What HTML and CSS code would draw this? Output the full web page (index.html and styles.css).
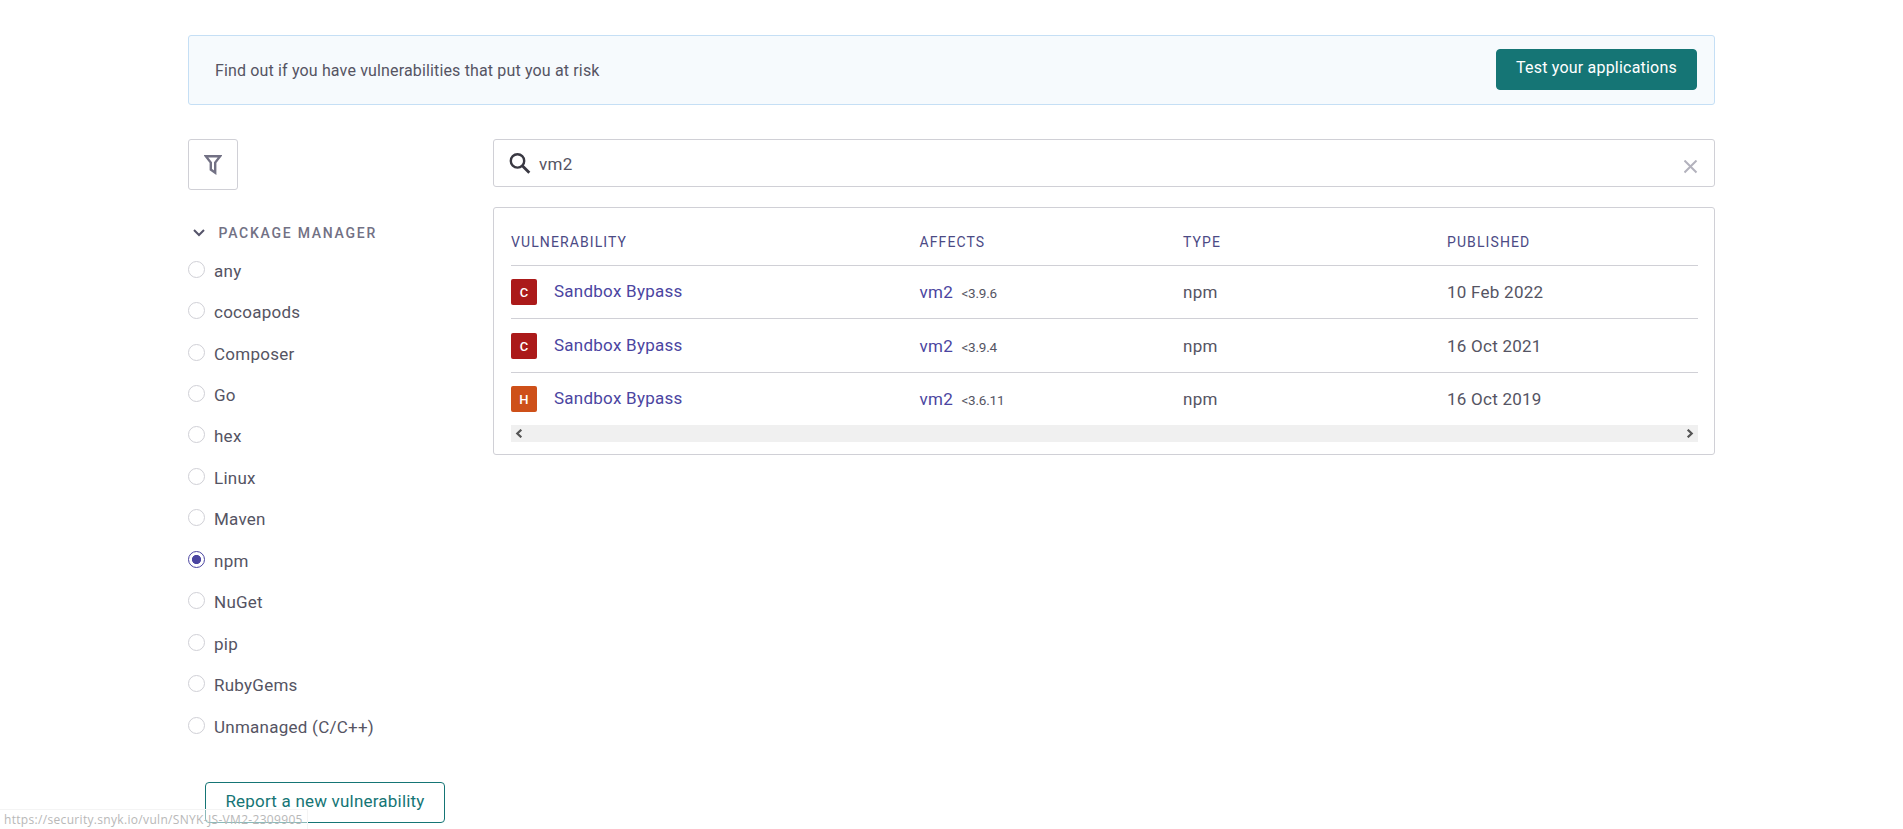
FILE: index.html
```html
<!DOCTYPE html>
<html lang="en">
<head>
    <meta charset="UTF-8">
    <meta name="viewport" content="width=device-width, initial-scale=1.0">
    <title>Vulnerability DB</title>
    <link rel="stylesheet" href="styles.css">
</head>
<body>
    <div class="container">
        <div class="banner">
            <p>Find out if you have vulnerabilities that put you at risk</p>
            <a class="button button-primary" href="#test">Test your applications</a>
        </div>

        <div class="columns">
            <div class="sidebar">
                <button class="filter" aria-label="Filter">
                    <svg width="18" height="21" viewBox="0 0 18 21" fill="none" stroke="#727184" stroke-width="2.4">
                        <path d="M1.8 2.2h14.4L11.2 8.6v10.1L6.8 15.6V8.6z"/>
                    </svg>
                </button>

                <h2 class="group-title">
                    <svg width="12" height="8" viewBox="0 0 12 8" fill="none" stroke="#55546a" stroke-width="2">
                        <path d="M1 1l5 5 5-5"/>
                    </svg>
                    <span>Package manager</span>
                </h2>

                <div class="options">
                    <label><input type="radio" name="type"><span>any</span></label>
                    <label><input type="radio" name="type"><span>cocoapods</span></label>
                    <label><input type="radio" name="type"><span>Composer</span></label>
                    <label><input type="radio" name="type"><span>Go</span></label>
                    <label><input type="radio" name="type"><span>hex</span></label>
                    <label><input type="radio" name="type"><span>Linux</span></label>
                    <label><input type="radio" name="type"><span>Maven</span></label>
                    <label><input type="radio" name="type" checked><span>npm</span></label>
                    <label><input type="radio" name="type"><span>NuGet</span></label>
                    <label><input type="radio" name="type"><span>pip</span></label>
                    <label><input type="radio" name="type"><span>RubyGems</span></label>
                    <label><input type="radio" name="type"><span>Unmanaged (C/C++)</span></label>
                </div>

                <a class="button button-outline" href="#report">Report a new vulnerability</a>
            </div>

            <div class="content">
                <div class="search">
                    <svg class="search-icon" width="22" height="22" viewBox="0 0 22 22" fill="none" stroke="#393842">
                        <circle cx="8.5" cy="8.9" r="6.7" stroke-width="2.4"/>
                        <path d="M13.3 13.7l7 7" stroke-width="2.8"/>
                    </svg>
                    <span class="search-text">vm2</span>
                    <svg class="clear-icon" width="14" height="14" viewBox="0 0 14 14" fill="none" stroke="#b3b2bd" stroke-width="2">
                        <path d="M.5.5l12 12M12.5.5l-12 12"/>
                    </svg>
                </div>

                <div class="results">
                    <table>
                        <thead>
                            <tr>
                                <th class="col-vuln">Vulnerability</th>
                                <th class="col-affects">Affects</th>
                                <th class="col-type">Type</th>
                                <th>Published</th>
                            </tr>
                        </thead>
                        <tbody>
                            <tr>
                                <td><div class="vuln"><span class="severity critical">C</span><a href="#1">Sandbox Bypass</a></div></td>
                                <td><a href="#vm2">vm2</a><span class="version">&lt;3.9.6</span></td>
                                <td>npm</td>
                                <td>10 Feb 2022</td>
                            </tr>
                            <tr class="tall">
                                <td><div class="vuln"><span class="severity critical">C</span><a href="#2">Sandbox Bypass</a></div></td>
                                <td><a href="#vm2">vm2</a><span class="version">&lt;3.9.4</span></td>
                                <td>npm</td>
                                <td>16 Oct 2021</td>
                            </tr>
                            <tr>
                                <td><div class="vuln"><span class="severity high">H</span><a href="#3">Sandbox Bypass</a></div></td>
                                <td><a href="#vm2">vm2</a><span class="version">&lt;3.6.11</span></td>
                                <td>npm</td>
                                <td>16 Oct 2019</td>
                            </tr>
                        </tbody>
                    </table>
                    <div class="scrollbar">
                        <svg width="8" height="9" viewBox="0 0 8 9" fill="none" stroke="#555" stroke-width="2.2">
                            <path d="M6.3.7L2.3 4.5l4 3.8"/>
                        </svg>
                        <svg width="8" height="9" viewBox="0 0 8 9" fill="none" stroke="#555" stroke-width="2.2">
                            <path d="M1.7.7l4 3.8-4 3.8"/>
                        </svg>
                    </div>
                </div>
            </div>
        </div>
    </div>

    <div class="status">https://security.snyk.io/vuln/SNYK-JS-VM2-2309905</div>
</body>
</html>
```
FILE: styles.css
```css
* {
    box-sizing: border-box;
}

body {
    margin: 0;
    height: 829px;
    overflow: hidden;
    background-color: #fff;
    color: #555463;
    font-family: Roboto, "Liberation Sans", sans-serif;
    font-size: 17px;
    letter-spacing: 0.25px;
}

a {
    color: #4b45a1;
    text-decoration: none;
}

.container {
    width: 1527px;
    margin: 0 auto;
    padding-top: 35px;
}

.banner {
    display: flex;
    justify-content: space-between;
    align-items: flex-start;
    height: 70px;
    padding: 13px 17px 0 26px;
    border: 1px solid #c5dff5;
    border-radius: 3px;
    background-color: #f6fafd;
}

.banner p {
    margin: 10px 0 0;
    font-size: 16px;
    line-height: 24px;
    letter-spacing: 0.15px;
}

.button {
    display: block;
    height: 41px;
    border: 1px solid #157575;
    border-radius: 4px;
    text-align: center;
}

.button-primary {
    width: 201px;
    background-color: #157575;
    color: #fff;
    font-size: 16px;
    line-height: 36px;
    letter-spacing: 0.2px;
}

.button-outline {
    width: 240px;
    margin: 35px 0 0 17px;
    color: #157575;
    line-height: 37px;
    letter-spacing: 0.2px;
}

.columns {
    display: flex;
    margin-top: 34px;
}

.sidebar {
    width: 305px;
}

.filter {
    display: flex;
    justify-content: center;
    align-items: center;
    width: 50px;
    height: 51px;
    padding: 0;
    border: 1px solid #d0d0d6;
    border-radius: 3px;
    background-color: #fff;
}

.group-title {
    display: flex;
    align-items: center;
    gap: 13.5px;
    height: 20px;
    margin: 33px 0 0;
    padding-left: 5px;
    color: #727184;
    font-size: 14px;
    font-weight: 500;
    letter-spacing: 1.75px;
    text-transform: uppercase;
}

.options {
    margin-top: 7px;
}

.options label {
    display: flex;
    align-items: center;
    gap: 9px;
    height: 41.45px;
}

.options input {
    appearance: none;
    width: 17px;
    height: 17px;
    margin: 0 0 3px;
    border: 1px solid #d0d0d6;
    border-radius: 50%;
}

.options input:checked {
    border-color: #4b45a1;
    background: radial-gradient(circle, #4b45a1 4.2px, #fff 5px);
}

.content {
    width: 1222px;
}

.search {
    display: flex;
    align-items: center;
    height: 48px;
    padding: 0 16px 0 15px;
    border: 1px solid #d0d0d6;
    border-radius: 3px;
}

.search-text {
    margin: 2px 0 0 8px;
}

.clear-icon {
    margin: 7px 0 0 auto;
}

.results {
    height: 248px;
    margin-top: 20px;
    padding: 13px 16px 0 17px;
    border: 1px solid #d0d0d6;
    border-radius: 3px;
}

table {
    width: 1187px;
    border-collapse: separate;
    border-spacing: 0;
    table-layout: fixed;
}

th {
    height: 44px;
    padding: 0 0 2px;
    color: #4b4a85;
    font-size: 14px;
    font-weight: 400;
    letter-spacing: 1.1px;
    text-align: left;
    text-transform: uppercase;
}

td {
    height: 53px;
    padding: 0;
    border-top: 1px solid #d0d0d6;
}

.tall td {
    height: 54px;
}

.col-vuln {
    width: 408.5px;
}

.col-affects {
    width: 263.5px;
}

.col-type {
    width: 264px;
}

.vuln {
    display: flex;
    align-items: center;
    gap: 17px;
}

.vuln a {
    margin-bottom: 2px;
}

.severity {
    width: 26px;
    height: 26px;
    border-radius: 2px;
    color: #fff;
    font-size: 13px;
    font-weight: 500;
    line-height: 27px;
    text-align: center;
}

.critical {
    background-color: #ab1a1a;
}

.high {
    background-color: #ce5019;
}

.version {
    margin-left: 8.5px;
    font-size: 13.5px;
    letter-spacing: -0.2px;
}

.scrollbar {
    display: flex;
    justify-content: space-between;
    align-items: center;
    height: 17px;
    padding: 0 4px;
    background-color: #f0f0f0;
}

/* link address shown over the page while hovering */
.status {
    position: absolute;
    left: 0;
    bottom: 0;
    width: 308px;
    height: 20px;
    padding-left: 4px;
    border-top: 1px solid #f4f4f4;
    border-right: 1px solid #f4f4f4;
    background-color: rgba(255, 255, 255, 0.5);
    color: #b8b8b8;
    font-family: "Open Sans", "Noto Sans", sans-serif;
    font-size: 12px;
    line-height: 19px;
    letter-spacing: 0.32px;
}
```
